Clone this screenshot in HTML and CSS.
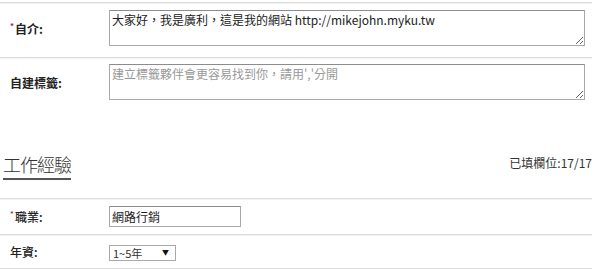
FILE: index.html
```html
<!DOCTYPE html>
<html lang="zh-Hant">
<head>
    <meta charset="UTF-8">
    <meta name="viewport" content="width=device-width, initial-scale=1.0">
    <title>個人資料</title>
    <link rel="stylesheet" href="styles.css">
</head>
<body>
    <div class="profile">
        <!-- About -->
        <div class="group">
            <div class="row">
                <label class="label"><span class="req">*</span>自介:</label>
                <textarea class="area">大家好，我是廣利，這是我的網站 http://mikejohn.myku.tw</textarea>
            </div>
            <div class="row">
                <label class="label">自建標籤:</label>
                <textarea class="area" placeholder="建立標籤夥伴會更容易找到你，請用','分開"></textarea>
            </div>
        </div>

        <!-- Work experience -->
        <div class="section-head">
            <h2>工作經驗</h2>
            <span class="filled">已填欄位:17/17</span>
        </div>
        <div class="group work">
            <div class="row">
                <label class="label"><span class="req">*</span>職業:</label>
                <input type="text" class="field" value="網路行銷">
            </div>
            <div class="row">
                <label class="label">年資:</label>
                <span class="select-wrap">
                    <select class="select">
                        <option>1~5年</option>
                        <option>5~10年</option>
                        <option>10年以上</option>
                    </select>
                </span>
            </div>
        </div>
    </div>
</body>
</html>
```

FILE: styles.css
```css
* {
    box-sizing: border-box;
    margin: 0;
    padding: 0;
}

body {
    background: #fff;
    color: #333;
    font-family: 'Noto Sans CJK TC', sans-serif;
    font-size: 12px;
}

.profile {
    width: 592px;
    padding-top: 2px;
}

.row {
    display: flex;
    align-items: center;
    border-top: 1px solid #dcdcdc;
    box-shadow: inset 0 1px 0 #f3f3f3;
    padding: 7px 0 11px;
}

.row + .row {
    padding-top: 6px;
    padding-bottom: 12px;
}

.label {
    width: 109px;
    padding-left: 10px;
    font-weight: bold;
    color: #222;
}

.req {
    color: #c0123a;
    font-size: 8px;
    vertical-align: top;
    margin-right: 1px;
}

.area {
    width: 476px;
    height: 36px;
    padding: 1px 2px;
    border: 1px solid #a9a9a9;
    border-top-color: #8c8c8c;
    font-family: inherit;
    font-size: 12px;
    line-height: 16px;
    color: #222;
    resize: vertical;
}

.area::placeholder {
    color: #999;
}

.section-head {
    display: flex;
    justify-content: space-between;
    align-items: flex-start;
    margin: 41px 0 18px;
}

.section-head h2 {
    margin-left: 3px;
    padding-bottom: 3px;
    border-bottom: 2px solid #555;
    font-size: 18px;
    font-weight: 300;
    line-height: 22px;
    letter-spacing: -1px;
    color: #333;
}

.filled {
    padding-top: 2px;
    font-size: 12px;
    line-height: 16px;
    color: #333;
}

.work .row {
    padding: 7px 0;
}

.work .row:last-child {
    border-bottom: 1px solid #dcdcdc;
}

.work .label {
    font-weight: 500;
}

.field {
    width: 132px;
    height: 21px;
    padding: 0 2px;
    border: 1px solid #a9a9a9;
    border-top-color: #8c8c8c;
    font-family: inherit;
    font-size: 12px;
    color: #222;
}

.select-wrap {
    position: relative;
    display: inline-block;
    margin-top: 2px;
}

.select {
    appearance: none;
    width: 67px;
    height: 16px;
    padding: 0 3px;
    border: 1px solid #a9a9a9;
    background: #fff;
    font-family: inherit;
    font-size: 11px;
    line-height: 14px;
    color: #333;
}

.select-wrap::after {
    content: '\25BC';
    position: absolute;
    right: 7px;
    top: 3px;
    font-size: 7px;
    line-height: 10px;
    color: #111;
    pointer-events: none;
}
```
